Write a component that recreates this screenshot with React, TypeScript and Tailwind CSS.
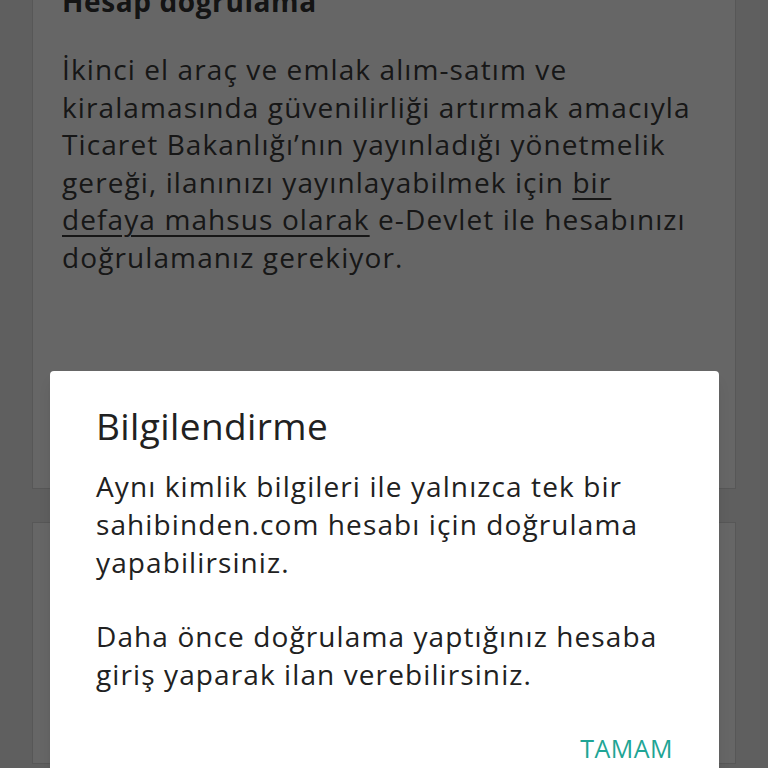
const font = { fontFamily: "'Open Sans', 'Noto Sans', sans-serif" };

export default function App() {
  return (
    <div className="relative h-[768px] w-[768px] overflow-hidden bg-[#eeeeee]" style={font}>
      <div className="px-[32px]">
        <div className="-mt-[18px] border-x border-b border-[#dadada] bg-white pl-[29px] pr-[30px] pb-[211px]">
          <h2 className="text-[28px] font-bold leading-[38px] tracking-[0.6px] text-[#333333]">Hesap doğrulama</h2>
          <p className="mt-[31px] text-[28px] leading-[37.6px] tracking-[1.1px] text-[#3a3a3a]">
            İkinci el araç ve emlak alım-satım ve kiralamasında güvenilirliği artırmak amacıyla Ticaret
            Bakanlığı’nın yayınladığı yönetmelik gereği, ilanınızı yayınlayabilmek için{" "}
            <span className="font-medium underline decoration-2 underline-offset-[5px]">bir defaya mahsus olarak</span>{" "}
            e-Devlet ile hesabınızı doğrulamanız gerekiyor.
          </p>
        </div>
        <div className="mt-[33px] h-[242px] border border-[#dadada] bg-white"></div>
      </div>

      <div className="absolute inset-0 bg-black/60">
        <div className="ml-[50px] mt-[371px] w-[669px] rounded-[4px] bg-white pl-[46px] pr-[46px] pt-[33px] pb-[40px] shadow-lg">
          <h3 className="text-[37px] font-medium leading-[44px] tracking-[0.4px] text-[#212121]">Bilgilendirme</h3>
          <p className="mt-[19px] text-[28px] leading-[38px] tracking-[1.1px] text-[#212121]">
            Aynı kimlik bilgileri ile yalnızca tek bir sahibinden.com hesabı için doğrulama yapabilirsiniz.
          </p>
          <p className="mt-[36px] text-[28px] leading-[38px] tracking-[1.1px] text-[#212121]">
            Daha önce doğrulama yaptığınız hesaba giriş yaparak ilan verebilirsiniz.
          </p>
          <div className="mt-[40px] flex justify-end">
            <button className="text-[25px] leading-[30px] tracking-[0.5px] text-[#1fa595]">TAMAM</button>
          </div>
        </div>
      </div>
    </div>
  );
}
